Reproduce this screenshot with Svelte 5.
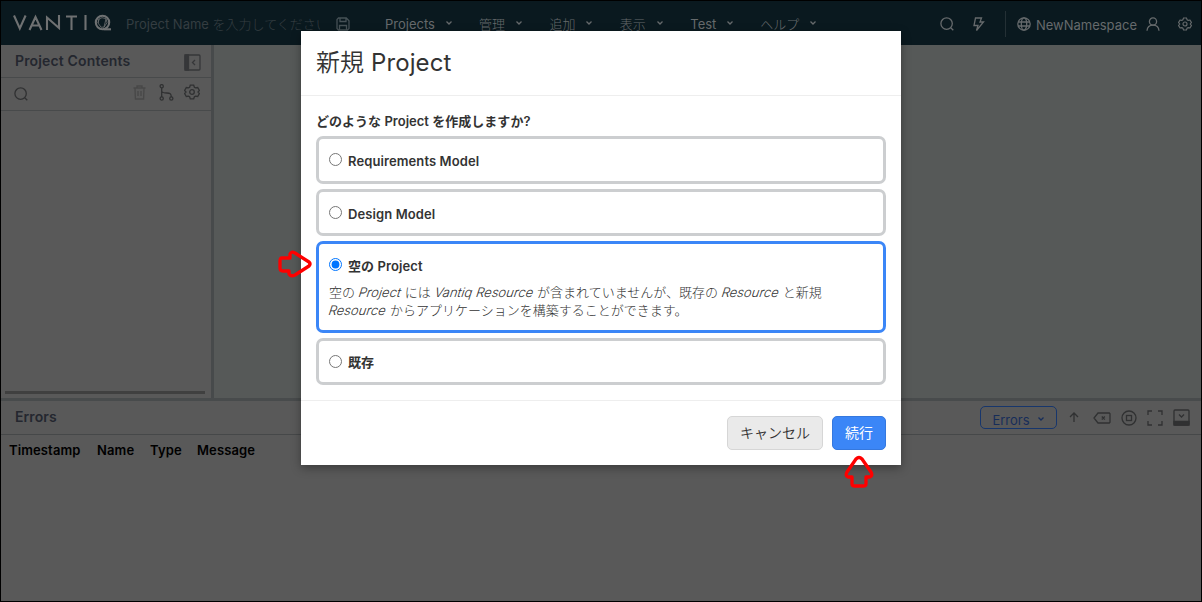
<script>
  const menus = [
    { label: 'Projects', width: 94 },
    { label: '管理', width: 70.4, ja: true },
    { label: '追加', width: 70.3, ja: true },
    { label: '表示', width: 70.6, ja: true },
    { label: 'Test', width: 70 },
    { label: 'ヘルプ', width: 60, ja: true }
  ];
  const columns = [
    { label: 'Timestamp', width: 88 },
    { label: 'Name', width: 53 },
    { label: 'Type', width: 47 },
    { label: 'Message', width: 70 }
  ];
  const options = [
    { id: 'req', label: 'Requirements Model' },
    { id: 'design', label: 'Design Model' },
    { id: 'empty', label: '空の Project' },
    { id: 'existing', label: '既存' }
  ];
  let selected = $state('empty');
</script>

{#snippet chevron()}
  <svg class="chev" width="8" height="6" viewBox="0 0 8 6"><path d="M1.5 1.5 4 4l2.500-2.500" /></svg>
{/snippet}

{#snippet gear(size)}
  <svg width={size} height={size} viewBox="0 0 16 16">
    <path d="M6.300 1.200h3.400l.7 2 1.200.7 2.100-.4 1.700 2.900-1.400 1.600 1.400 1.600-1.700 2.900-2.100-.4-1.200.7-.7 2H6.300l-.7-2-1.200-.7-2.100.4L.6 9.600 2 8 .6 6.400l1.700-2.900 2.100.4 1.200-.7z" />
    <circle cx="8" cy="8" r="2.300" />
  </svg>
{/snippet}

{#snippet search(size)}
  <svg width={size} height={size} viewBox="0 0 14 14"><circle cx="6.600" cy="6.600" r="5.700" /><path d="m10.700 10.700 2.600 2.600" /></svg>
{/snippet}

<div class="app">
  <header>
    <svg class="logo" width="100" height="18" viewBox="0 0 100 18" role="img" aria-label="VANTIQ">
      <path class="mark" d="M1 1.500 6.800 14.500 12.600 1.500M16.500 16 22.500 3l6 13M19 11.500h7M34 16V3.500L46 14V1M53 2.500h11M58.500 2.500V16M72.500 1v15" />
      <circle class="mark" cx="89.500" cy="8.500" r="6.700" />
      <path class="mark" d="M90.500 15.300h7.500" />
      <path class="web" d="m86 5 3-1.300 4 1 1 4-3 4.500h-3L85 9zM86 5l-1 4M93 5l-2 8" />
    </svg>
    <div class="project-name">Project Name <span class="ja">を入力してください</span></div>
    <svg class="save" width="14" height="14" viewBox="0 0 14 14"><path d="M2.500 1h7.800L13 3.700v7.800L11.500 13h-9L1 11.500v-9zM4 1v3.500h6V1M3.500 13V8.500h7V13" /></svg>
    <nav>
      {#each menus as m}
        <div class="menu" style="width: {m.width}px"><span class:ja={m.ja}>{m.label}</span>{@render chevron()}</div>
      {/each}
    </nav>
    <div class="tools">
      {@render search(14)}
      <svg class="bolt" width="13" height="15" viewBox="0 0 13 15"><path d="M3.500 1h6L8 5h3.500L4.500 13.500 6 8.500H2z" /></svg>
      <i class="sep"></i>
      <svg class="globe" width="14" height="14" viewBox="0 0 14 14"><circle cx="7" cy="7" r="6.200" /><ellipse cx="7" cy="7" rx="2.700" ry="6.200" /><path d="M1 5h12M1 9h12" /></svg>
      <span class="ns">NewNamespace</span>
      <svg class="user" width="14" height="14" viewBox="0 0 14 14"><circle cx="7" cy="4.500" r="3.600" /><path d="M1 13.700c.3-3.500 2.600-5.500 6-5.500s5.700 2 6 5.500" /></svg>
      {@render gear(14)}
    </div>
  </header>

  <div class="work">
    <aside>
      <div class="side-title">
        <b>Project Contents</b>
        <svg width="17" height="17" viewBox="0 0 17 17"><rect x="1" y="1" width="15" height="15" rx="1" /><path class="solid" d="M1 1h3.500v15H1z" /><path d="m11 6-2.500 2.500L11 11" /></svg>
      </div>
      <div class="side-tools">
        {@render search(14)}
        <svg class="trash" width="13" height="15" viewBox="0 0 13 15"><path d="M.5 3h12M4 3V1h5v2M2 3l.4 11h8.200L11 3M5 6v5M8 6v5" /></svg>
        <svg class="branch" width="15" height="17" viewBox="0 0 15 17"><circle cx="2.700" cy="2.200" r="1.600" /><circle cx="2.700" cy="14.500" r="1.600" /><circle cx="12.300" cy="14.500" r="1.600" /><path d="M2.700 4v9M2.700 7.500c1 1.500 2 1.500 5 1.500 3.300 0 4.600.5 4.600 4" /></svg>
        {@render gear(16)}
      </div>
      <div class="tree"><div class="scroll"></div></div>
    </aside>
    <main></main>
  </div>

  <section class="errors">
    <div class="errors-head">
      <b>Errors</b>
      <button class="filter">Errors {@render chevron()}</button>
      <div class="actions">
        <svg width="10" height="11" viewBox="0 0 10 11"><path d="M5 10V1M1 5l4-4 4 4" /></svg>
        <svg width="18" height="12" viewBox="0 0 18 12"><path d="M5 1h11.300l.7.7v8.600l-.7.700H5L1 6zM8.800 4.500l3 3M11.800 4.500l-3 3" /></svg>
        <svg width="16" height="16" viewBox="0 0 16 16"><circle cx="8" cy="8" r="7" /><rect x="5.500" y="5.500" width="5" height="5" /></svg>
        <svg width="16" height="16" viewBox="0 0 16 16"><path d="M1 5V1h4M11 1h4v4M15 11v4h-4M5 15H1v-4" /></svg>
        <svg width="17" height="17" viewBox="0 0 17 17"><rect x="1" y="1" width="15" height="15" rx="1" /><path class="solid" d="M1 12.500h15V16H1z" /><path d="m6 5.500 2.500 2.500L11 5.500" /></svg>
      </div>
    </div>
    <div class="columns">
      {#each columns as c}<span style="width: {c.width}px">{c.label}</span>{/each}
    </div>
  </section>

  <div class="modal">
    <h1><span>新規</span> Project</h1>
    <div class="body">
      <h2>どのような Project を作成しますか?</h2>
      {#each options as o}
        <label class="option {o.id}" class:on={selected === o.id}>
          <span class="row"><input type="radio" name="kind" value={o.id} bind:group={selected} /><b>{o.label}</b></span>
          {#if selected === o.id && o.id === 'empty'}
            <span class="desc">空の <em>Project</em> には <em>Vantiq Resource</em> が含まれていませんが、既存の <em>Resource</em> と新規<br /><em>Resource</em> からアプリケーションを構築することができます。</span>
          {/if}
        </label>
      {/each}
    </div>
    <footer>
      <button class="cancel">キャンセル</button>
      <button class="go">続行</button>
    </footer>
  </div>

  <svg class="pointer right" width="34" height="30" viewBox="0 0 34 30"><path d="M4 9Q2 9 2 12v7q0 3 3 3h6v3q2 3 6 1l14-9q2-2 0-4L17 4q-4-2-5 1v4z" /></svg>
  <svg class="pointer up" width="30" height="34" viewBox="0 0 30 34"><path d="M12 4q3-3 6 0l9 13q2 4-1 5h-4v7q0 2-3 2h-8q-3 0-3-2v-7H4q-3-1-1-5z" /></svg>
</div>

<style>
  :global(body) { margin: 0; }
  * { box-sizing: border-box; }
  .app {
    position: relative; width: 1202px; height: 602px; overflow: hidden;
    display: flex; flex-direction: column;
    border: 1px solid #000; background: #595959;
    font-family: Inter, "Noto Sans CJK JP", sans-serif; font-size: 13px; color: #333;
  }
  svg { display: block; flex: none; fill: none; stroke: currentColor; stroke-width: 1.3; }
  .solid { fill: currentColor; }
  .ja { font-weight: 300; }
  header { height: 44px; flex: none; display: flex; align-items: center; background: #0a191f; color: #666a6c; padding: 2px 9px 0 12px; }
  .logo { color: #6f7172; margin-top: -3px; }
  .mark { stroke-width: 2.1; }
  .web { stroke-width: .8; }
  .project-name { margin-left: 13px; width: 194px; overflow: hidden; white-space: nowrap; font-size: 13px; line-height: 22px; color: #343d41; }
  .save { margin-left: 16px; color: #465156; }
  nav { display: flex; margin-left: 35px; line-height: 20px; }
  .menu { display: flex; align-items: center; gap: 10px; }
  .menu .chev { margin-top: -2px; }
  .tools { display: flex; align-items: center; margin-left: auto; }
  .bolt { margin-left: 18px; }
  .sep { width: 1px; height: 26px; background: #243035; margin: 0 11px 0 20px; }
  .ns { margin: 2px 9px 0 5px; font-size: 13px; }
  .user { margin-right: 18px; }
  .work { height: 353px; flex: none; display: flex; }
  aside { width: 213px; border-right: 3px solid #474a4b; display: flex; flex-direction: column; }
  .side-title { height: 33px; padding: 0 10px 0 14px; display: flex; justify-content: space-between; align-items: center; border-bottom: 1px solid #484a4b; color: #24272f; font-size: 14px; }
  .side-title b { margin-top: -2px; letter-spacing: .15px; }
  .side-title svg { color: #363739; margin-top: 2px; }
  .side-tools { height: 33px; padding: 0 11px 4px 13px; display: flex; align-items: center; border-bottom: 1px solid #484a4b; color: #303132; }
  .side-tools > svg:first-child { margin-top: 3px; }
  .trash { margin-left: auto; margin-right: 13px; color: #484848; }
  .branch { margin-right: 10px; }
  .tree { flex: 1; display: flex; align-items: flex-end; padding: 0 6px 4px 4px; }
  .scroll { height: 3px; width: 100%; background: #404040; }
  main { flex: 1; background: #565958; }
  .errors { flex: 1; border-top: 3px solid #484b4c; }
  .errors-head { height: 34px; display: flex; align-items: center; padding: 0 10px 0 14px; border-bottom: 1px solid #464849; color: #24272f; font-size: 14px; }
  .errors-head b { margin-top: -2px; }
  .filter { margin: 0 12px 0 auto; width: 77px; height: 23px; padding: 4px 0 0; display: flex; align-items: center; justify-content: center; gap: 7px; border: 1px solid #17366c; border-radius: 5px; background: none; font: 13px Inter, sans-serif; color: #172d59; }
  .filter .chev { margin-top: -2px; }
  .actions { display: flex; align-items: center; width: 122px; gap: 10px; color: #303132; }
  .actions svg:first-child { margin-right: 4px; }
  .columns { display: flex; padding: 7px 0 0 8px; line-height: 16px; font-weight: 600; letter-spacing: .12px; color: #000; }
  .modal { position: absolute; left: 300px; top: 30px; width: 600px; height: 434px; display: flex; flex-direction: column; background: #fff; box-shadow: 0 3px 9px rgba(0, 0, 0, .35); }
  h1 { margin: 0; height: 65px; padding: 1px 15px 0; line-height: 62px; font-size: 24px; font-weight: 400; letter-spacing: .1px; border-bottom: 1px solid #eee; }
  h1 span { font-weight: 350; }
  .body { padding: 16px 15px 0; height: 304px; }
  h2 { margin: 0 0 5px; font-size: 13px; line-height: 19px; font-weight: 600; letter-spacing: .02px; }
  .option { display: block; height: 47px; margin-bottom: 5px; padding: 10px 10px 0; border: 3px solid #ccced0; border-radius: 7px; }
  .option.req { height: 48px; }
  .option.on { height: 92px; border-color: #3b86f7; margin-bottom: 5px; }
  .row { display: flex; align-items: center; height: 24px; }
  input { width: 13px; height: 13px; margin: 0 6px 3px 0; }
  b { font-weight: 600; letter-spacing: .1px; }
  .empty b { margin-top: -1px; }
  .existing b { margin-top: -3px; }
  .desc { display: block; margin-top: 5px; line-height: 18px; font-weight: 300; white-space: nowrap; word-spacing: .1px; }
  em { display: inline-block; font-style: normal; font-weight: 350; letter-spacing: .03px; transform: skewX(-18deg); }
  footer { flex: 1; display: flex; gap: 9px; justify-content: flex-end; padding: 15px 15px 0; border-top: 1px solid #eee; }
  footer button { height: 34px; border: 1px solid #d6d6d6; border-radius: 5px; padding: 0; font: 350 14px/30px Inter, "Noto Sans CJK JP", sans-serif; }
  .cancel { width: 96px; background: #eaeaea; color: #333; }
  footer .go { width: 54px; background: #3b86f7; border-color: #3578de; color: #fff; font-weight: 400; }
  .pointer { position: absolute; color: #f00; stroke-width: 3.300; stroke-linejoin: round; }
  .right { left: 277px; top: 248px; }
  .up { left: 843px; top: 454px; }
</style>
